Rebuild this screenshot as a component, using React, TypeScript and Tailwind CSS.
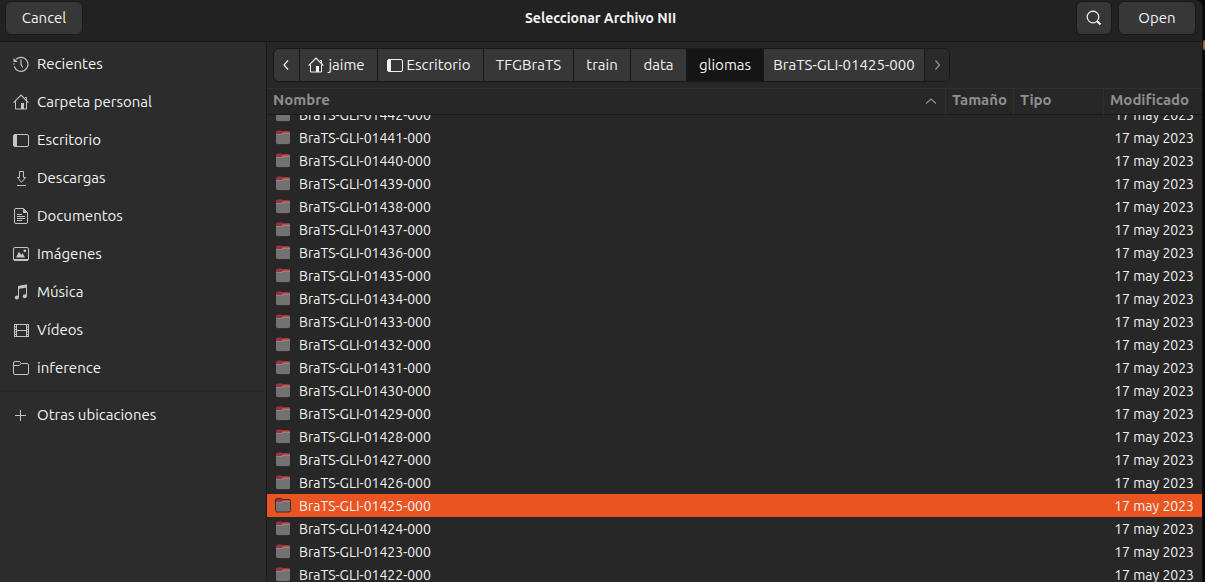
import { useLayoutEffect, useRef, useState } from "react";
import type { ReactNode } from "react";

type IconProps = { children: ReactNode };

function Icon({ children }: IconProps) {
  return (
    <svg
      viewBox="0 0 16 16"
      width="16"
      height="16"
      fill="none"
      stroke="currentColor"
      strokeWidth="1"
      aria-hidden="true"
      className="shrink-0"
    >
      {children}
    </svg>
  );
}

const RecentIcon = () => (
  <Icon>
    <path d="M3.200 3.200A7 7 0 1 1 1.300 10.500" strokeWidth="1.200" />
    <path d="M.9 8.800a7 7 0 0 1 .2-1.600" />
    <path d="M.5 2v4h4.500z" fill="currentColor" stroke="none" />
    <path d="M8 3.500V8.500L9.800 11.500" strokeWidth="1.200" />
  </Icon>
);

const HomeIcon = () => (
  <Icon>
    <path d="M.6 8.600 8 1.200l7.400 7.400" strokeWidth="1.200" />
    <path d="M2.500 7.500v7.500h11V7.500M13.500 6.500v-3h-1.500" />
    <path d="M8 9h3v6H8z" fill="currentColor" stroke="none" />
  </Icon>
);

const DesktopIcon = () => (
  <Icon>
    <rect x=".5" y="2.500" width="15" height="12" rx="1.500" />
    <path d="M1 3h3v11H1z" fill="currentColor" stroke="none" />
  </Icon>
);

const DownloadIcon = () => (
  <Icon>
    <path d="M6.500 1.500h4v6h2L8.500 12.300 4.500 7.500h2z" />
    <path d="M4 15.500h9" />
  </Icon>
);

const DocumentIcon = () => (
  <Icon>
    <path d="M3 .5h7.500l4 4V14a1.500 1.500 0 0 1-1.500 1.500H3A1.500 1.500 0 0 1 1.500 14V2A1.500 1.500 0 0 1 3 .5z" />
    <path d="M10 .5V5h4.500z" fill="currentColor" stroke="none" />
    <path d="M4 6.500h5M4 8.500h8M4 10.500h8M4 12.500h5" />
  </Icon>
);

const PictureIcon = () => (
  <Icon>
    <rect x=".5" y="1.500" width="15" height="13" rx="1.500" />
    <path d="M1 13h14v1.500H1z" fill="currentColor" stroke="none" />
    <path d="M3 11.500 6 5.500l2.200 3.500 1.300-2 2.500 4.500z" fill="currentColor" stroke="none" />
    <circle cx="11.800" cy="4.800" r="1.400" fill="currentColor" stroke="none" />
  </Icon>
);

const MusicIcon = () => (
  <Icon>
    <path d="M5.500 13V2.500l8-1.500v11" />
    <path d="M5 2.200 14 .6v3L5 5z" fill="currentColor" stroke="none" />
    <circle cx="3.800" cy="13.500" r="2" fill="currentColor" stroke="none" />
    <circle cx="11.800" cy="12.300" r="2" fill="currentColor" stroke="none" />
  </Icon>
);

const VideoIcon = () => (
  <Icon>
    <path d="M1.500 2v13M15.500 2v13M3.500 2.500v12M13.500 2.500v12M1 2.500h15M1 14.500h15M3.500 8.500h10" />
    <path d="M1.500 5h2M1.500 7.500h2M1.500 10h2M1.500 12.500h2M13.500 5h2M13.500 7.500h2M13.500 10h2M13.500 12.500h2" />
  </Icon>
);

const FolderIcon = () => (
  <Icon>
    <path d="M.5 13V3A1.500 1.500 0 0 1 2 1.500h4.500c1 0 1 2 2 2H14A1.500 1.500 0 0 1 15.500 5v8a1.500 1.500 0 0 1-1.500 1.500H2A1.500 1.500 0 0 1 .5 13z" />
    <path d="M.5 5.500H5c1.500 0 2-1 3.500-2" />
  </Icon>
);

const PlusIcon = () => (
  <Icon>
    <path d="M2 8.500h11M7.500 3v11" />
  </Icon>
);

const SearchIcon = () => (
  <Icon>
    <circle cx="7" cy="7" r="5.800" strokeWidth="1.200" />
    <path d="m11 11 3.500 3.500" strokeWidth="2" />
  </Icon>
);

function Chevron({ d }: { d: string }) {
  return (
    <Icon>
      <path d={d} strokeWidth="1.200" />
    </Icon>
  );
}

function FolderThumb({ selected }: { selected: boolean }) {
  return (
    <svg viewBox="0 1 16 16" width="16" height="16" aria-hidden="true" className="shrink-0">
      <path d="M1 3a1.500 1.500 0 0 1 1.500-1.500h4L8 2.500h6A1 1 0 0 1 15 3.500V6H1z" fill="#9c3048" />
      <path d="M8 2.500h6a1 1 0 0 1 1 1V5H7z" fill="#d8463a" />
      <path d="M1 5h5.500L8 4h7v9.500a1.500 1.500 0 0 1-1.500 1.500h-11A1.500 1.500 0 0 1 1 13.500z" fill="#727272" />
      <path d="M1 5h5.500L8 4h7v1H8.500L7 6H1z" fill="#8b8584" />
      {selected ? (
        <path
          d="M.5 3A1.500 1.500 0 0 1 2 1.500h4.500l1.500 1h6A1.500 1.500 0 0 1 15.500 4v9.500a1.500 1.500 0 0 1-1.500 1.500H2A1.500 1.500 0 0 1 .5 13.500z"
          fill="none"
          stroke="#4a2a26"
        />
      ) : (
        <path d="M2 15.500h12" stroke="#3a2a2f" />
      )}
    </svg>
  );
}

const places = [
  { label: "Recientes", icon: <RecentIcon /> },
  { label: "Carpeta personal", icon: <HomeIcon /> },
  { label: "Escritorio", icon: <DesktopIcon /> },
  { label: "Descargas", icon: <DownloadIcon /> },
  { label: "Documentos", icon: <DocumentIcon /> },
  { label: "Imágenes", icon: <PictureIcon /> },
  { label: "Música", icon: <MusicIcon /> },
  { label: "Vídeos", icon: <VideoIcon /> },
  { label: "inference", icon: <FolderIcon /> },
];

const crumbs = [
  { label: "jaime", icon: <HomeIcon />, style: "w-[78px] pr-1" },
  { label: "Escritorio", icon: <DesktopIcon />, style: "w-[106px] pr-1" },
  { label: "TFGBraTS", style: "w-[90px]" },
  { label: "train", style: "w-[57px]" },
  { label: "data", style: "w-[56px]" },
  { label: "gliomas", style: "w-[77px] bg-[#151515]" },
  { label: "BraTS-GLI-01425-000", style: "w-[161px]" },
];

const folders = Array.from({ length: 21 }, (_, i) => `BraTS-GLI-0${1442 - i}-000`);

function PlaceLink({ label, icon }: { label: string; icon: ReactNode }) {
  return (
    <a href="#" className="flex h-[38px] items-center gap-2 pl-[13px] text-[#f2f2f2] hover:bg-white/5">
      <span className="flex text-[#c4c4c4]">{icon}</span>
      {label}
    </a>
  );
}

export default function App() {
  const list = useRef<HTMLDivElement>(null);
  const [selected, setSelected] = useState("BraTS-GLI-01425-000");

  useLayoutEffect(() => {
    if (list.current) list.current.scrollTop = 12;
  }, []);

  const th = "border-y border-[#303030] border-b-[#1b1b1b] bg-[#272727] px-1.5 pt-0 pb-0.5 text-left font-bold";

  return (
    <div className="h-screen bg-[#080808] pr-[2px] font-['Ubuntu','Noto_Sans',sans-serif] text-[15px] text-[#f2f2f2]">
      <div className="flex h-full flex-col overflow-hidden rounded-tr-lg border-r border-[#111] bg-[#272727]">
        <header className="grid h-[42px] shrink-0 grid-cols-[1fr_auto_1fr] items-center border-b border-[#161616] bg-[#222222] pr-1.5 pb-[5px] pl-[5px]">
          <div className="flex">
            <button className="h-[34px] w-[78px] rounded-md border border-[#191919] bg-[#373737]">Cancel</button>
          </div>
          <h1 className="text-sm font-bold">Seleccionar Archivo NII</h1>
          <div className="flex justify-end gap-1.5">
            <button
              aria-label="Buscar"
              className="flex h-[34px] w-9 items-center justify-center rounded-md border border-[#191919] bg-[#373737]"
            >
              <SearchIcon />
            </button>
            <button className="h-[34px] w-[78px] rounded-md border border-[#191919] bg-[#373737]">Open</button>
          </div>
        </header>

        <div className="flex min-h-0 flex-1">
          <nav className="w-[267px] shrink-0 border-r border-[#1a1a1a] bg-[#2c2c2c] pt-[3px]">
            {places.map((p) => (
              <PlaceLink key={p.label} label={p.label} icon={p.icon} />
            ))}
            <hr className="my-1 border-[#262626]" />
            <PlaceLink label="Otras ubicaciones" icon={<PlusIcon />} />
          </nav>

          <main className="flex min-w-0 flex-1 flex-col">
            <div className="flex shrink-0 px-1.5 py-1.5">
              <div className="flex h-[34px] divide-x divide-[#191919] overflow-hidden rounded-md border border-[#191919] bg-[#373737]">
                <button aria-label="Atrás" className="flex w-[26px] items-center justify-center">
                  <Chevron d="M9 3.500 5 8l4 4.500" />
                </button>
                {crumbs.map((c) => (
                  <button
                    key={c.label}
                    className={`${c.style} flex items-center justify-center gap-1 whitespace-nowrap`}
                  >
                    {c.icon}
                    {c.label}
                  </button>
                ))}
                <button
                  aria-label="Adelante"
                  className="flex w-6 items-center justify-center bg-[#2a2a2a] text-[#929292]"
                >
                  <Chevron d="M6.500 3.500l4 4.500-4 4.500" />
                </button>
              </div>
            </div>

            <div ref={list} className="min-h-0 flex-1 overflow-y-auto [scrollbar-width:none]">
              <table className="w-full table-fixed border-separate border-spacing-0">
                <thead className="sticky top-0 text-[#8f8f8f]">
                  <tr className="h-[27px]">
                    <th className={th}>
                      <span className="flex items-center justify-between">
                        Nombre
                        <Chevron d="M3 10.500 8 6l5 4.500" />
                      </span>
                    </th>
                    <th className={`${th} w-[68px] border-l`}>Tamaño</th>
                    <th className={`${th} w-[90px] border-l`}>Tipo</th>
                    <th className={`${th} w-[99px] border-l`}>Modificado</th>
                  </tr>
                </thead>
                <tbody className="text-sm">
                  {folders.map((name) => (
                    <tr
                      key={name}
                      onClick={() => setSelected(name)}
                      className={`h-[23px] ${name === selected ? "bg-[#e95420]" : ""}`}
                    >
                      <td className="p-0 pl-2">
                        <span className="flex items-center gap-2">
                          <FolderThumb selected={name === selected} />
                          {name}
                        </span>
                      </td>
                      <td className="p-0" />
                      <td className="p-0" />
                      <td className="p-0 pr-2 text-right whitespace-nowrap">17 may 2023</td>
                    </tr>
                  ))}
                </tbody>
              </table>
            </div>
          </main>
        </div>
      </div>
      <span className="absolute top-10 right-0 h-2.5 w-0.5 rounded-l-full bg-[#a8682e]" />
    </div>
  );
}
